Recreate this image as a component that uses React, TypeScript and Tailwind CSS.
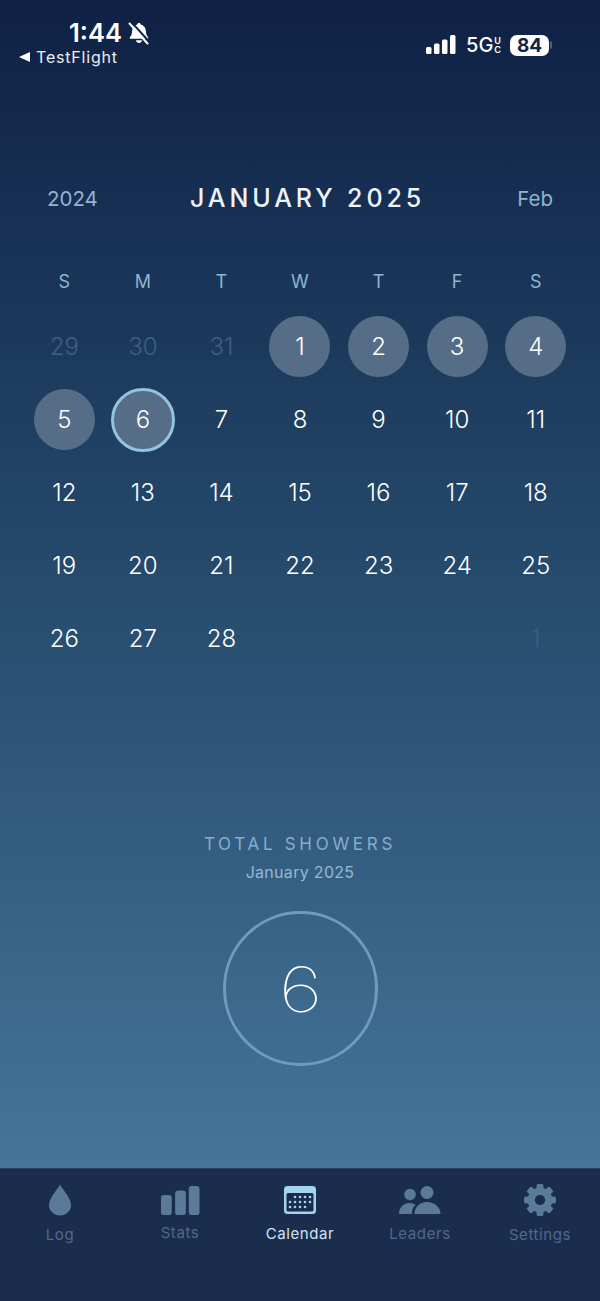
import React from "react";

const Bell = () => (
  <svg width="22" height="23" viewBox="0 0 22 23" fill="#fff">
    <path d="M11 1c1 0 1.700.7 1.800 1.600 3.200.8 4.900 3.400 5.100 6.600.2 2.800.7 4.300 2.200 6 .6.700.2 1.500-.7 1.500H2.600c-.9 0-1.300-.8-.7-1.500 1.500-1.700 2-3.200 2.200-6 .2-3.200 1.900-5.800 5.100-6.600C9.300 1.700 10 1 11 1z" />
    <path d="M8 18.200h6c-.2 1.700-1.400 2.800-3 2.800s-2.800-1.100-3-2.800z" />
    <path d="M3.800 .6 21.500 20" stroke="#10234a" strokeWidth="2" />
    <path d="M1.500 1.500 19.500 21.500" stroke="#fff" strokeWidth="2" strokeLinecap="round" />
  </svg>
);

const Signal = () => (
  <svg width="30" height="20" viewBox="0 0 30 20" fill="#fff">
    <rect x="0" y="12" width="5.500" height="7" rx="1.500" />
    <rect x="8" y="8.500" width="5.500" height="10.500" rx="1.500" />
    <rect x="16" y="4.500" width="5.500" height="14.500" rx="1.500" />
    <rect x="24" y="0" width="5.500" height="19" rx="1.500" />
  </svg>
);

const Drop = () => (
  <svg width="24" height="32" viewBox="0 0 24 32" fill="#5b7a97">
    <path d="M12 0.500C14 5 23 14 23 21a11 10.500 0 0 1-22 0C1 14 10 5 12 .5z" />
  </svg>
);

const Bars = () => (
  <svg width="39" height="29" viewBox="0 0 40 29" preserveAspectRatio="none" fill="#5b7a97">
    <rect x="0" y="9" width="11" height="20" rx="2.500" />
    <rect x="14.500" y="4.500" width="11" height="24.500" rx="2.500" />
    <rect x="28.500" y="0" width="11" height="29" rx="2.500" />
  </svg>
);

const Cal = () => (
  <svg width="32" height="28" viewBox="0 0 32 28">
    <rect x="0" y="0" width="32" height="28" rx="3.500" fill="#a5d4ef" />
    <rect x="2.500" y="7" width="27" height="18.500" rx="1.500" fill="#1b2d4d" />
    {[
      [11, 11], [16, 11], [21, 11], [26, 11],
      [6, 16], [11, 16], [16, 16], [21, 16], [26, 16],
      [6, 21], [11, 21], [16, 21], [21, 21],
    ].map(([x, y]) => (
      <circle key={`${x}-${y}`} cx={x} cy={y} r="1.300" fill="#a5d4ef" />
    ))}
  </svg>
);

const People = () => (
  <svg width="42" height="29" viewBox="0 0 42 29" fill="#5b7a97">
    <circle cx="11" cy="8.500" r="5.800" />
    <circle cx="28" cy="6.500" r="6.500" />
    <path d="M0 28c0-6 4-11 10.500-11 2.500 0 4.500.7 6 1.900C13.500 21 13 24 13 28z" />
    <path d="M15.500 28c0-7 5-12 12.500-12s13.500 5 13.500 12z" />
  </svg>
);

const Gear = () => {
  const teeth = Array.from({ length: 8 }, (_, i) => i * 45);
  return (
    <svg width="32" height="32" viewBox="0 0 32 32">
      {teeth.map((a) => (
        <rect key={a} x="12.500" y="0" width="7" height="8" rx="1.800" fill="#5b7a97" transform={`rotate(${a} 16 16)`} />
      ))}
      <circle cx="16" cy="16" r="8.500" fill="none" stroke="#5b7a97" strokeWidth="7" />
      <circle cx="16" cy="16" r="12" fill="none" stroke="#5b7a97" strokeWidth="1" />
      <circle cx="16" cy="16" r="4.800" fill="#1b2d4d" />
    </svg>
  );
};

const weekdays = ["S", "M", "T", "W", "T", "F", "S"];

type Cell = { n: string; kind?: "muted" | "done" | "today" | "blank" };
const cells: Cell[] = [
  { n: "29", kind: "muted" }, { n: "30", kind: "muted" }, { n: "31", kind: "muted" },
  { n: "1", kind: "done" }, { n: "2", kind: "done" }, { n: "3", kind: "done" }, { n: "4", kind: "done" },
  { n: "5", kind: "done" }, { n: "6", kind: "today" },
  ...["7","8","9","10","11","12","13","14","15","16","17","18","19","20","21","22","23","24","25","26","27","28"].map((n) => ({ n })),
  { n: "", kind: "blank" }, { n: "", kind: "blank" }, { n: "", kind: "blank" },
  { n: "1", kind: "muted" },
];

function DayCell({ n, kind }: Cell) {
  const base = "flex items-center justify-center rounded-full w-[61px] h-[61px] text-[24px] leading-none font-light";
  let cls = base + " text-white";
  if (kind === "muted") cls = base + " text-[#3f5f80]";
  if (kind === "done") cls = base + " text-white bg-[#566d87]";
  if (kind === "today") cls = "flex items-center justify-center rounded-full w-[64px] h-[64px] text-[24px] leading-none font-light text-white bg-[#566d87] border-[3px] border-[#93c3de]";
  return (
    <div className="flex items-center justify-center h-[73.2px]">
      {kind !== "blank" && <div className={cls}>{n}</div>}
    </div>
  );
}

function Tab({ icon, label, active, labelClass }: { icon: React.ReactNode; label: string; active?: boolean; labelClass?: string }) {
  return (
    <div className="flex flex-col items-center w-[120px]">
      <div className="flex items-center justify-center h-[32px]">{icon}</div>
      <div className={"text-[15px] leading-[20px] tracking-[0.6px] " + (active ? "text-[#cfe6f5] " : "text-[#4f6a8a] ") + (labelClass ?? "mt-[8px]")}>{label}</div>
    </div>
  );
}

export default function App() {
  return (
    <div className="flex flex-col w-[600px] h-[1301px] overflow-hidden font-['Inter',sans-serif]">
      <main className="flex flex-col h-[1168px] bg-gradient-to-b from-[#0f2144] via-[#264b6d] to-[#457599]">
        <div className="flex justify-between h-[171px] pt-[18px] pl-[19px] pr-[48px]">
          <div className="flex flex-col">
            <div className="flex items-center pl-[50px] gap-[6px] h-[30px]">
              <span className="text-[25.500px] leading-[30px] font-semibold text-white">1:44</span>
              <Bell />
            </div>
            <div className="flex items-center gap-[6px] h-[20px] mt-[-1px]">
              <span className="w-0 h-0 border-y-[5.500px] border-y-transparent border-r-[11px] border-r-white" />
              <span className="text-[16px] leading-[20px] text-[#e8eef5] tracking-[0.8px]">TestFlight</span>
            </div>
          </div>
          <div className="flex items-center gap-[10px] h-[54px]">
            <Signal />
            <div className="flex items-center">
              <span className="text-[20px] font-medium text-white leading-none">5G</span>
              <span className="flex flex-col text-[9px] leading-[9px] font-semibold text-white ml-[1px]"><span>U</span><span>C</span></span>
            </div>
            <div className="flex items-center ml-[-1px]">
              <div className="flex items-center justify-center w-[39px] h-[21px] rounded-[7px] bg-white text-[19px] font-bold text-[#13244a] leading-none">84</div>
              <div className="w-[2px] h-[8px] ml-[1px] rounded-r bg-[#4d6282]" />
            </div>
          </div>
        </div>

        <div className="flex items-center justify-between h-[56px] px-[47px]">
          <span className="text-[20.500px] text-[#8fb4d2]">2024</span>
          <span className="text-[25px] font-medium tracking-[3.900px] text-[#edf3f9]">JANUARY 2025</span>
          <span className="text-[20.500px] text-[#8fb4d2]">Feb</span>
        </div>

        <div className="grid grid-cols-7 px-[25px] mt-[26px]">
          {weekdays.map((d, i) => (
            <div key={i} className="flex items-center justify-center h-[57px] text-[18px] text-[#8db6d3]">{d}</div>
          ))}
          {cells.map((c, i) => (
            <DayCell key={i} {...c} />
          ))}
        </div>

        <div className="flex flex-col items-center mt-[156px]">
          <div className="text-[17px] leading-[24px] tracking-[3.700px] text-[#83afd0]">TOTAL SHOWERS</div>
          <div className="text-[16px] leading-[24px] mt-[4px] tracking-[0.3px] text-[#93b9d5]">January 2025</div>
          <div className="flex items-center justify-center w-[155px] h-[155px] mt-[27px] rounded-full border-[3px] border-[#6f9cbe]">
            <span className="text-[62px] leading-none font-thin text-white scale-x-[1.25] translate-y-[2px]">6</span>
          </div>
        </div>
      </main>

      <nav className="flex flex-1 justify-between pt-[15px] bg-[#1b2d4d] border-t border-[#2a3e5e]">
        <Tab icon={<Drop />} label="Log" labelClass="mt-[9px]" />
        <Tab icon={<Bars />} label="Stats" labelClass="mt-[7px]" />
        <Tab icon={<Cal />} label="Calendar" active />
        <Tab icon={<People />} label="Leaders" />
        <Tab icon={<Gear />} label="Settings" labelClass="mt-[9px]" />
      </nav>
    </div>
  );
}
